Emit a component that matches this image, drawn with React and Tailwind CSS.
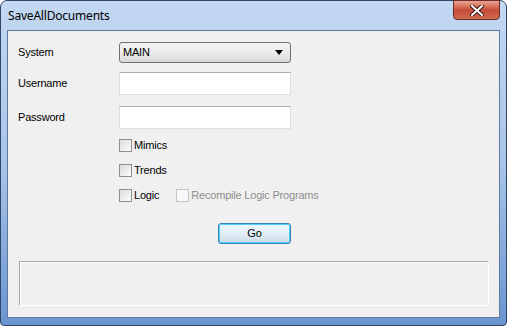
const font = { fontFamily: 'Tahoma, "Liberation Sans", Arial, sans-serif' }

function CheckBox({ label, disabled }) {
  return (
    <label className={`flex items-center gap-[2px] ${disabled ? 'text-[#8d8d8d]' : 'text-black'}`}>
      <span
        className={`h-[13px] w-[13px] border ${
          disabled ? 'border-[#c4c4c4] bg-[#f7f7f7]' : 'border-[#8e8f8f] bg-gradient-to-br from-[#dcdcdc] to-[#fbfbfb]'
        }`}
      />
      <span className="leading-[13px]">{label}</span>
    </label>
  )
}

export default function App() {
  return (
    <div
      className="flex h-[326px] w-[507px] flex-col rounded-t-[7px] rounded-b-[4px] border border-[#2f4767] bg-gradient-to-b from-[#c3d8f1] via-[#a9c4e8] to-[#6b95d0] px-[6px] pb-[7px] text-[11px] tracking-[-0.2px]"
      style={font}
    >
      <div className="flex h-[29px] items-start justify-between">
        <div
          className="pl-[1px] pt-[8px] text-[12px] leading-[14px] tracking-[-0.2px] text-black"
          style={{ fontFamily: '"Noto Sans", "Open Sans", sans-serif' }}
        >
          SaveAllDocuments
        </div>
        <div className="-mt-[1px] flex h-[20px] w-[47px] items-center justify-center rounded-b-[4px] border border-[#6b2a25] bg-gradient-to-b from-[#e8a493] via-[#c74d3a] to-[#cf6a52]">
          <svg width="14" height="11" viewBox="0 0 14 11">
            <path d="M2 1 L12 10 M12 1 L2 10" stroke="#3d1a14" strokeWidth="4" strokeLinecap="square" />
            <path d="M2 1 L12 10 M12 1 L2 10" stroke="#ffffff" strokeWidth="2" strokeLinecap="square" />
          </svg>
        </div>
      </div>

      <div className="flex flex-1 flex-col border border-[#5b7aa3] bg-[#f0f0f0] pl-[10px] pt-[11px] text-black">
        <div className="flex h-[21px] items-center">
          <span className="w-[101px]">System</span>
          <div className="flex h-[21px] w-[172px] items-center justify-between rounded-[3px] border border-[#707070] bg-gradient-to-b from-[#f3f3f3] via-[#ebebeb] to-[#d8d8d8] pl-[3px] pr-[7px]">
            <span>MAIN</span>
            <svg width="8" height="5" viewBox="0 0 8 5">
              <path d="M0 0 H8 L4 5 Z" fill="#000" />
            </svg>
          </div>
        </div>

        <div className="mt-[9px] flex h-[23px] items-center">
          <span className="w-[101px]">Username</span>
          <div className="h-[23px] w-[172px] border border-[#dbdfe6] border-t-[#abadb3] bg-white" />
        </div>

        <div className="mt-[11px] flex h-[23px] items-center">
          <span className="w-[101px]">Password</span>
          <div className="h-[23px] w-[172px] border border-[#dbdfe6] border-t-[#abadb3] bg-white" />
        </div>

        <div className="ml-[101px] mt-[10px] flex flex-col gap-[12px]">
          <CheckBox label="Mimics" />
          <CheckBox label="Trends" />
          <div className="flex items-center gap-[17px]">
            <CheckBox label="Logic" />
            <CheckBox label="Recompile Logic Programs" disabled />
          </div>
        </div>

        <div className="ml-[200px] mt-[21px] flex h-[21px] w-[73px] items-center justify-center rounded-[3px] border border-[#3c7fb1] bg-gradient-to-b from-[#eef7fc] via-[#e2eef6] to-[#cbdbe5] shadow-[inset_0_0_0_1px_#48d1fd]">
          Go
        </div>

        <div className="mb-[11px] ml-[1px] mr-[10px] mt-[17px] flex-1 border border-[#a9a9a9] border-b-white border-r-white shadow-[inset_1px_1px_0_#fff]" />
      </div>
    </div>
  )
}
